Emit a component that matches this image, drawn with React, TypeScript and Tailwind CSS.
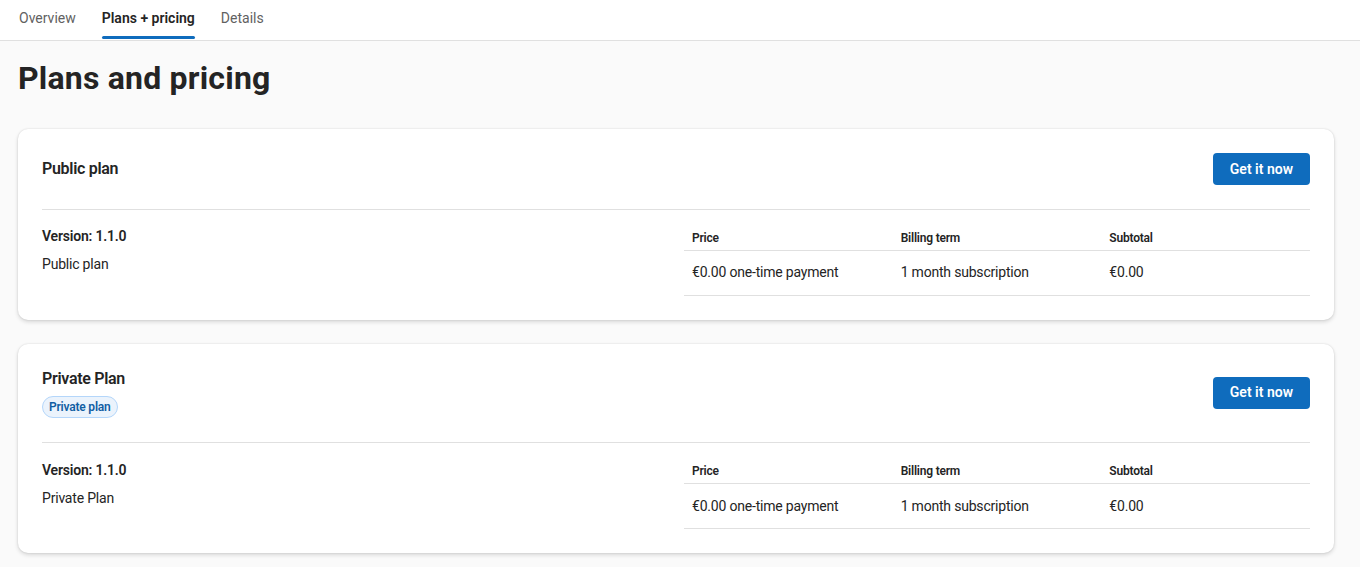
const plans = [
  { id: 'public', name: 'Public plan', badge: null as string | null, desc: 'Public plan' },
  { id: 'private', name: 'Private Plan', badge: 'Private plan', desc: 'Private Plan' },
]

const tabs = ['Overview', 'Plans + pricing', 'Details']

function PlanCard({ plan }: { plan: (typeof plans)[number] }) {
  return (
    <div className="bg-white rounded-[10px] shadow-[0_0_2px_rgba(0,0,0,0.12),0_2px_4px_rgba(0,0,0,0.14)] px-6 pt-6 pb-6">
      {/* header */}
      <div className="flex items-center justify-between pb-6 border-b border-[#e0e0e0]">
        <div>
          <h2 className="text-[16px] leading-[22px] font-semibold text-[#242424] tracking-[-0.3px]">{plan.name}</h2>
          {plan.badge && (
            <span className="inline-flex items-center mt-[6px] h-[22px] px-[6px] rounded-full border border-[#b4d6fa] bg-[#ebf3fc] text-[#115ea3] text-[12px] font-semibold">
              {plan.badge}
            </span>
          )}
        </div>
        <button className="h-8 px-[17px] rounded-[4px] bg-[#0f6cbd] text-white text-[14px] font-semibold tracking-normal">
          Get it now
        </button>
      </div>

      {/* body */}
      <div className={`grid grid-cols-2 gap-4 ${plan.badge ? 'pt-[17px]' : 'pt-4'}`}>
        <div>
          <p className="text-[14px] leading-5 font-semibold text-[#242424]">Version: 1.1.0</p>
          <p className="text-[14px] leading-5 text-[#242424] mt-2">{plan.desc}</p>
        </div>
        <table className="w-full table-fixed text-left text-[#242424]">
          <thead>
            <tr className="border-b border-[#e0e0e0]">
              <th className="px-2 h-6 text-[12px] font-semibold">Price</th>
              <th className="px-2 h-6 text-[12px] font-semibold">Billing term</th>
              <th className="px-2 h-6 text-[12px] font-semibold">Subtotal</th>
            </tr>
          </thead>
          <tbody>
            <tr className="border-b border-[#e0e0e0]">
              <td className="px-2 h-[45px] text-[14px]">€0.00 one-time payment</td>
              <td className="px-2 h-[45px] text-[14px]">1 month subscription</td>
              <td className="px-2 h-[45px] text-[14px]">€0.00</td>
            </tr>
          </tbody>
        </table>
      </div>
    </div>
  )
}

export default function App() {
  return (
    <div className="min-h-screen bg-[#fafafa] font-['Roboto',sans-serif] tracking-[-0.2px] text-[#242424]">
      {/* tabs */}
      <div className="bg-white border-b border-[#e0e0e0] h-[41px] flex gap-[26px] pl-[19px] tracking-normal">
        {tabs.map((t) => (
          <div key={t} className="relative flex items-center h-full pb-[3px]">
            <span
              className={
                t === 'Plans + pricing'
                  ? 'text-[14px] font-semibold text-[#242424]'
                  : 'text-[14px] text-[#616161]'
              }
            >
              {t}
            </span>
            {t === 'Plans + pricing' && (
              <span className="absolute left-0 right-0 bottom-[1px] h-[3px] rounded-full bg-[#0f6cbd]" />
            )}
          </div>
        ))}
      </div>

      <div className="pl-[18px] pr-[26px] pt-[17px] pb-6">
        <h1 className="text-[32px] leading-10 font-bold text-[#242424] tracking-[0.2px] mb-[31px]">Plans and pricing</h1>
        <div className="flex flex-col gap-6">
          {plans.map((p) => (
            <PlanCard key={p.id} plan={p} />
          ))}
        </div>
      </div>
    </div>
  )
}
